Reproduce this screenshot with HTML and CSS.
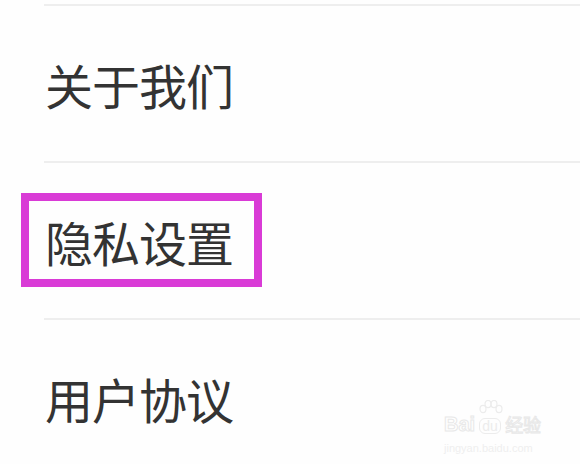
FILE: index.html
```html
<!DOCTYPE html>
<html lang="zh-CN">
<head>
<meta charset="utf-8">
<link rel="stylesheet" href="styles.css">
</head>
<body>
<div class="page">
  <ul class="menu">
    <li class="item"><span class="label">关于我们</span></li>
    <li class="item"><span class="label highlighted">隐私设置</span></li>
    <li class="item"><span class="label">用户协议</span></li>
  </ul>
  <div class="watermark">
    <div class="wm-top">
      <span class="wm-bai">Bai</span>
      <span class="wm-du">
        <svg class="wm-paw" width="26" height="18" viewBox="0 0 26 18">
          <ellipse cx="6" cy="9" rx="3" ry="3.6" fill="none" stroke="#ececec" stroke-width="1.2"/>
          <ellipse cx="11" cy="4" rx="3" ry="3.6" fill="none" stroke="#ececec" stroke-width="1.2"/>
          <ellipse cx="17" cy="4" rx="3" ry="3.6" fill="none" stroke="#ececec" stroke-width="1.2"/>
          <ellipse cx="22" cy="9" rx="3" ry="3.6" fill="none" stroke="#ececec" stroke-width="1.2"/>
        </svg>
        <span class="wm-du-text">du</span>
      </span>
      <span class="wm-jy">经验</span>
    </div>
    <div class="wm-url">jingyan.baidu.com</div>
  </div>
</div>
</body>
</html>
```
FILE: styles.css
```css
html, body {
  margin: 0;
  padding: 0;
  background: #ffffff;
}
.page {
  position: relative;
  width: 580px;
  height: 464px;
  overflow: hidden;
  background: #fefefe;
  font-family: "Noto Sans CJK SC", "Noto Sans", sans-serif;
}
.menu {
  list-style: none;
  margin: 0;
  padding: 4px 0 0 44px;
}
.item {
  position: relative;
  border-top: 2px solid #eeeeee;
  height: 155px;
  display: flex;
  align-items: center;
  padding-left: 1px;
}
.label {
  position: relative;
  font-size: 48px;
  line-height: 1;
  color: #333333;
  letter-spacing: -1px;
  top: 0;
}
.highlighted::after {
  content: "";
  position: absolute;
  left: -24px;
  top: -24px;
  width: 225px;
  height: 78px;
  border: 8px solid #d93bd6;
}
.watermark {
  position: absolute;
  left: 444px;
  top: 400px;
  color: #ececec;
  font-family: "Liberation Sans", sans-serif;
}
.wm-top {
  display: flex;
  align-items: flex-end;
  gap: 2px;
}
.wm-bai {
  font-size: 20px;
  line-height: 20px;
  font-weight: bold;
  color: #fff;
  -webkit-text-stroke: 1px #e8e8e8;
}
.wm-du {
  display: flex;
  flex-direction: column;
  align-items: center;
}
.wm-paw {
  display: block;
}
.wm-du-text {
  font-size: 14px;
  line-height: 14px;
  border: 1px solid #ececec;
  border-radius: 6px;
  padding: 0 2px;
}
.wm-jy {
  font-family: "Noto Sans CJK SC", sans-serif;
  font-size: 18px;
  line-height: 20px;
  color: #fff;
  -webkit-text-stroke: 1px #e8e8e8;
}
.wm-url {
  font-size: 11px;
  margin-top: 8px;
  color: #efefef;
}
```
